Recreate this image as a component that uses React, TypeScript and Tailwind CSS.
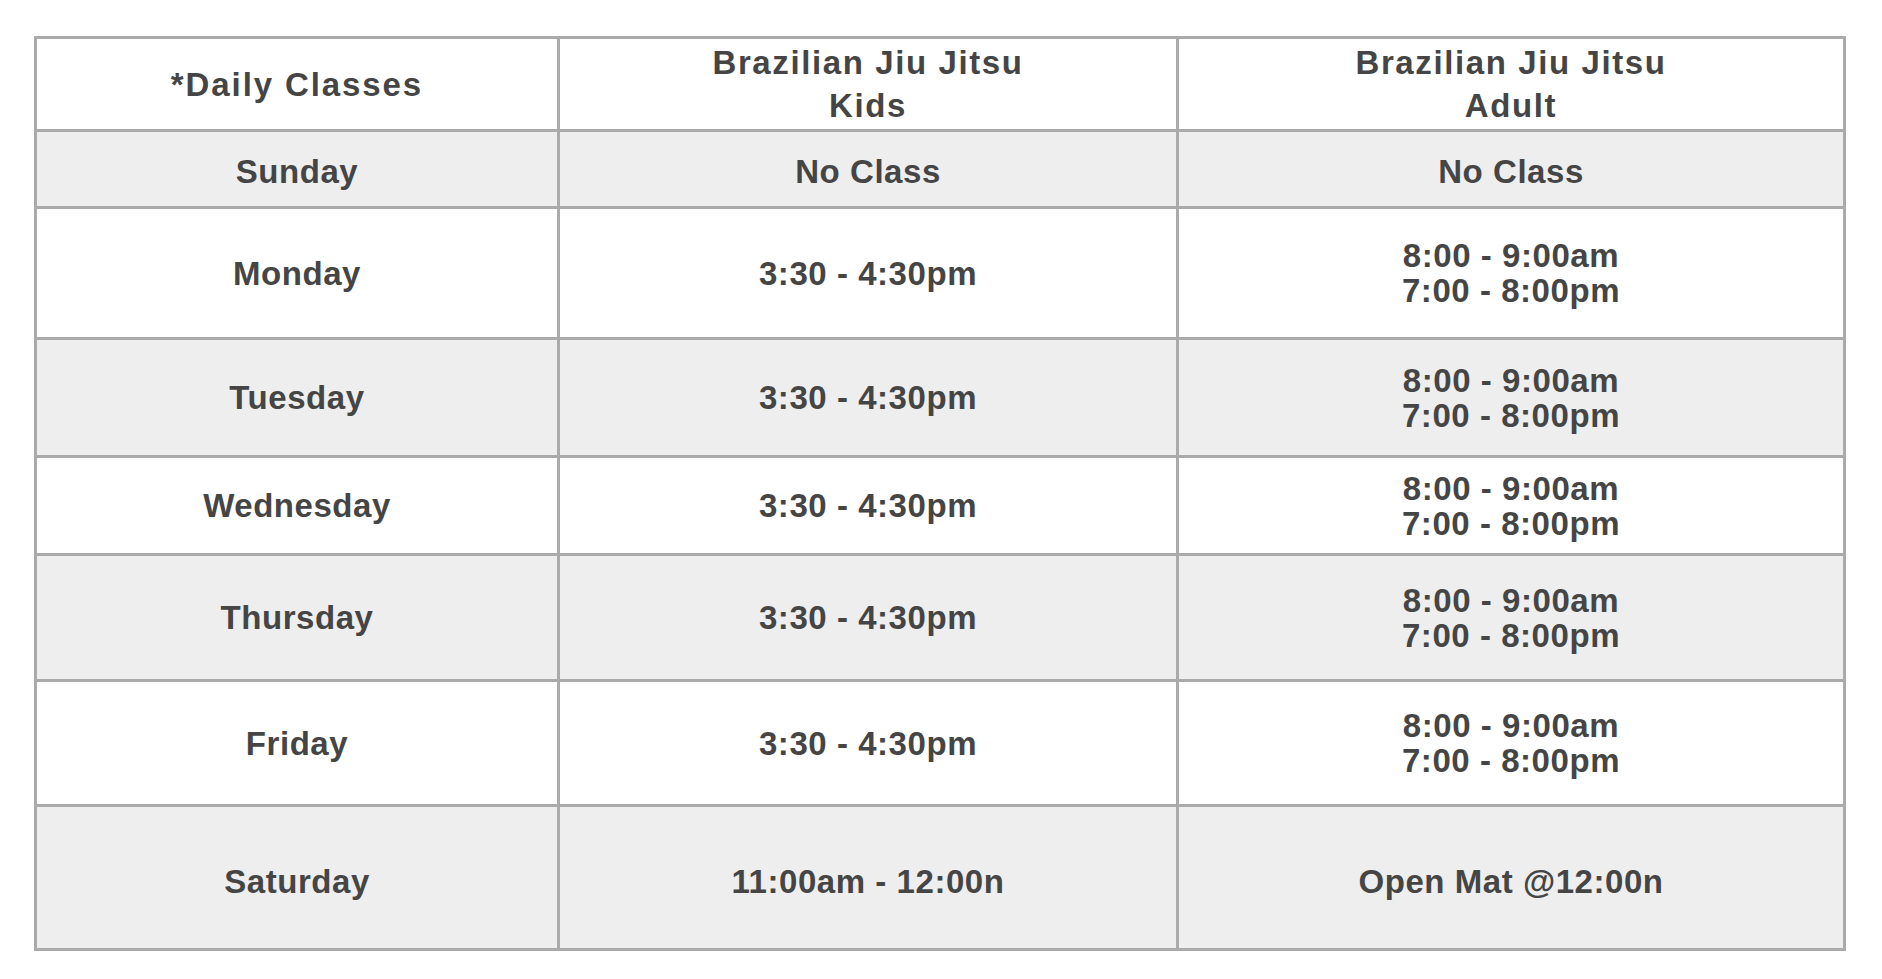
import React from 'react';

type Row = { day: string; kids: string[]; adult: string[]; shaded: boolean; nudge?: string };

const rows: Row[] = [
  { day: 'Sunday', kids: ['No Class'], adult: ['No Class'], shaded: true, nudge: 'pt-[5px]' },
  { day: 'Monday', kids: ['3:30 - 4:30pm'], adult: ['8:00 - 9:00am', '7:00 - 8:00pm'], shaded: false },
  { day: 'Tuesday', kids: ['3:30 - 4:30pm'], adult: ['8:00 - 9:00am', '7:00 - 8:00pm'], shaded: true },
  { day: 'Wednesday', kids: ['3:30 - 4:30pm'], adult: ['8:00 - 9:00am', '7:00 - 8:00pm'], shaded: false },
  { day: 'Thursday', kids: ['3:30 - 4:30pm'], adult: ['8:00 - 9:00am', '7:00 - 8:00pm'], shaded: true },
  { day: 'Friday', kids: ['3:30 - 4:30pm'], adult: ['8:00 - 9:00am', '7:00 - 8:00pm'], shaded: false },
  { day: 'Saturday', kids: ['11:00am - 12:00n'], adult: ['Open Mat @12:00n'], shaded: true, nudge: 'pt-[7px]' },
];

const Cell = ({
  lines,
  shaded,
  type = 'body',
  nudge,
}: {
  lines: string[];
  shaded: boolean;
  type?: 'body' | 'title' | 'program';
  nudge?: string;
}) => (
  <div
    className={`flex flex-col items-center justify-center text-center ${shaded ? 'bg-[#eeeeee]' : 'bg-white'} ${
      type === 'title'
        ? 'leading-[43px] tracking-[1.9px]'
        : type === 'program'
          ? 'leading-[43px] tracking-[1.6px]'
          : 'leading-[35px] tracking-[0.55px]'
    } ${nudge ?? ''}`}
  >
    {lines.map((l) => (
      <span key={l}>{l}</span>
    ))}
  </div>
);

export default function App() {
  return (
    <div className="min-h-screen bg-white pt-[36px] pl-[34px]">
      <div
        className="inline-grid grid-cols-[520px_616px_664px] grid-rows-[90px_74px_128px_115px_95px_123px_122px_141px] gap-[3px] bg-[#aaaaaa] p-[3px] text-[33px] font-bold text-[#454545]"
        style={{ fontFamily: '"Liberation Sans", Arial, sans-serif' }}
      >
        {/* Header */}
        <Cell lines={['*Daily Classes']} shaded={false} type="title" />
        <Cell lines={['Brazilian Jiu Jitsu', 'Kids']} shaded={false} type="program" />
        <Cell lines={['Brazilian Jiu Jitsu', 'Adult']} shaded={false} type="program" />

        {rows.map((r) => (
          <React.Fragment key={r.day}>
            <Cell lines={[r.day]} shaded={r.shaded} nudge={r.nudge} />
            <Cell lines={r.kids} shaded={r.shaded} nudge={r.nudge} />
            <Cell lines={r.adult} shaded={r.shaded} nudge={r.nudge} />
          </React.Fragment>
        ))}
      </div>
    </div>
  );
}
